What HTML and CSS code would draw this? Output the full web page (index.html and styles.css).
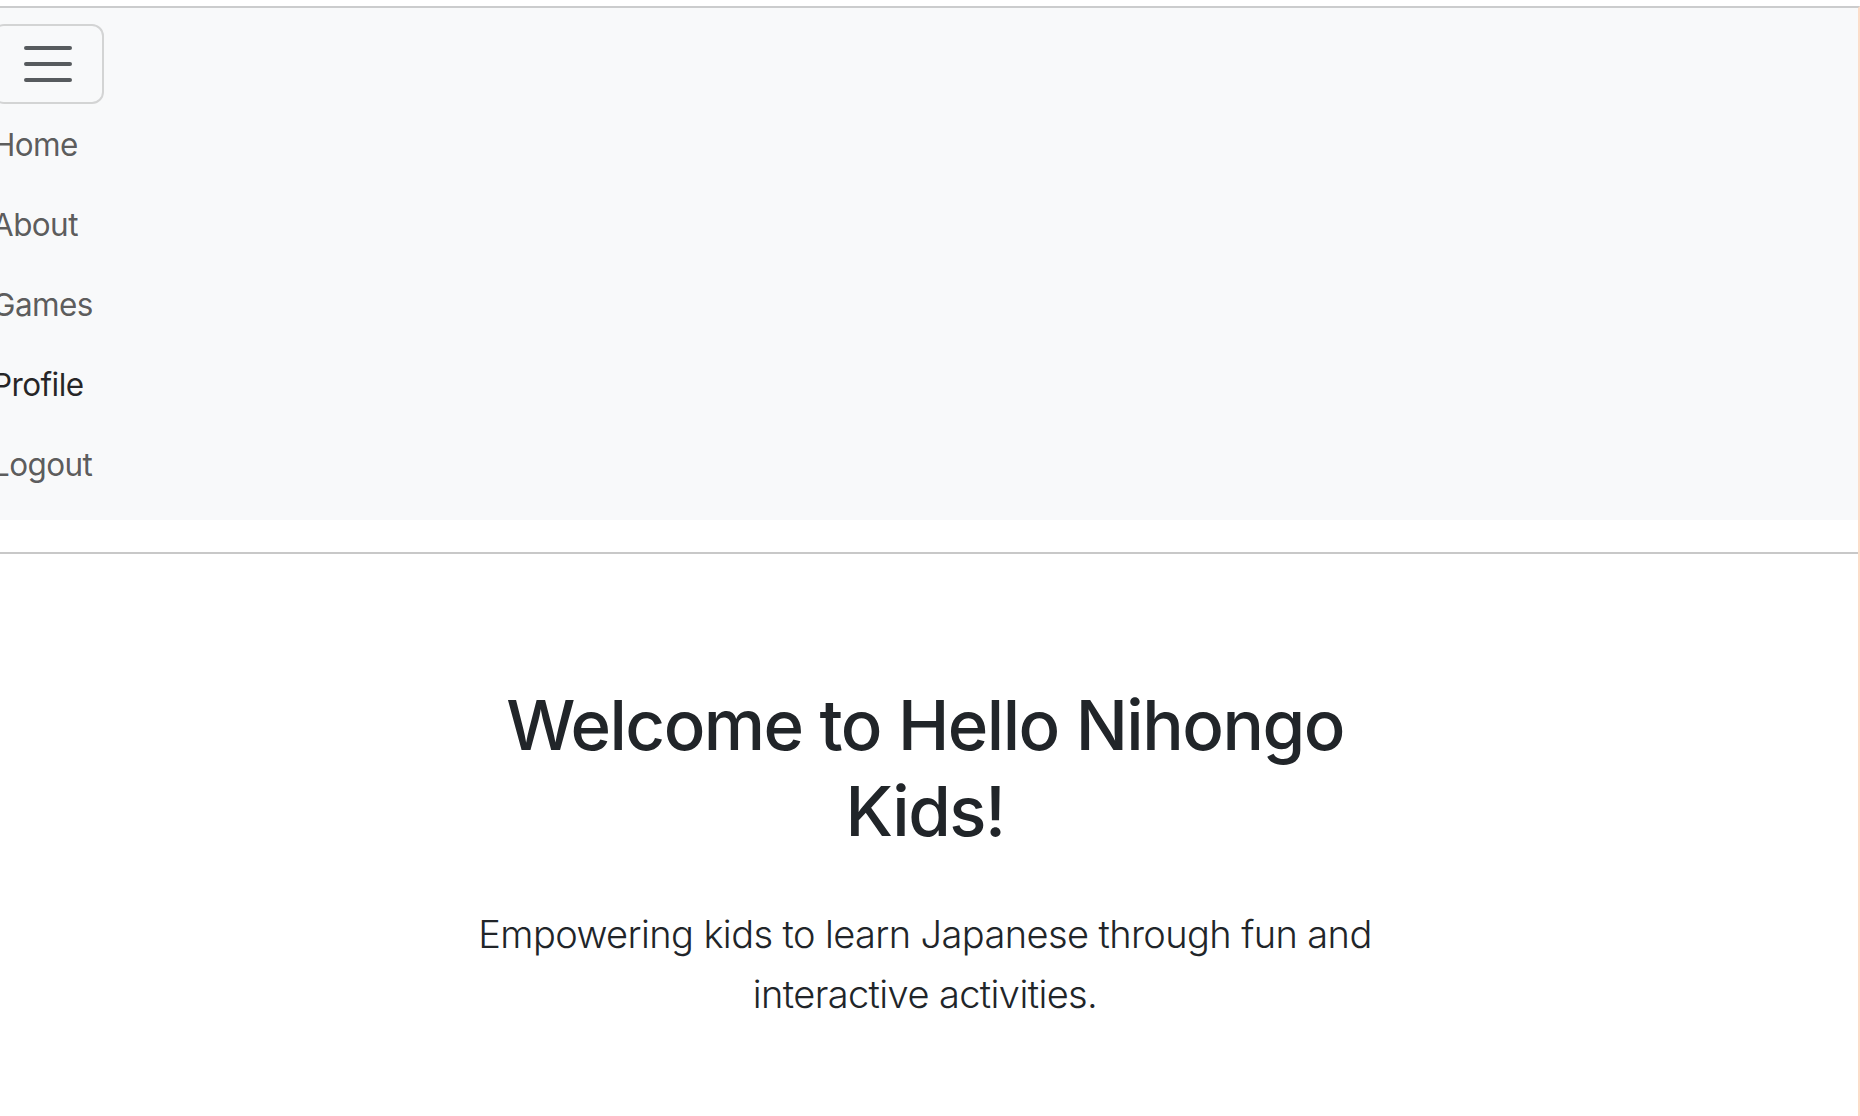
FILE: index.html
```html
<!DOCTYPE html>
<html lang="en">
<head>
<meta charset="utf-8">
<title>Hello Nihongo Kids</title>
<link rel="stylesheet" href="styles.css">
</head>
<body>
<div class="frame">
  <header class="site-header">
    <nav class="navbar">
      <div class="nav-inner">
        <button class="toggler" type="button" aria-label="Toggle navigation">
          <svg class="toggler-icon" viewBox="0 0 30 30" width="60" height="60">
            <path d="M4 7h22M4 15h22M4 23h22" stroke="rgba(33,37,41,0.75)" stroke-width="2" stroke-linecap="round" stroke-miterlimit="10" fill="none"/>
          </svg>
        </button>
        <ul class="nav-list">
          <li><a class="nav-link" href="#">Home</a></li>
          <li><a class="nav-link" href="#">About</a></li>
          <li><a class="nav-link" href="#">Games</a></li>
          <li><a class="nav-link active" href="#">Profile</a></li>
          <li><a class="nav-link" href="#">Logout</a></li>
        </ul>
      </div>
    </nav>
    <hr class="divider">
  </header>
  <main class="hero">
    <div class="hero-inner">
      <h1 class="hero-title">Welcome to Hello Nihongo Kids!</h1>
      <p class="lead">Empowering kids to learn Japanese through fun and interactive activities.</p>
    </div>
  </main>
</div>
</body>
</html>
```

FILE: styles.css
```css
* { box-sizing: border-box; }

html, body {
  margin: 0;
  padding: 0;
  background: #ffffff;
}

body {
  font-family: Inter, "Liberation Sans", sans-serif;
  color: #212529;
  overflow: hidden;
}

.frame {
  margin-top: 6px;
  border-top: 2px solid #cbcccd;
  border-right: 2px solid #fcdcc8;
  min-height: calc(100vh - 6px);
}

.navbar {
  background: #f8f9fa;
  padding: 16px 0;
}

.nav-inner {
  margin-left: -8px;
}

.toggler {
  display: block;
  padding: 8px 24px;
  margin: 0;
  border: 2px solid rgba(0, 0, 0, 0.15);
  border-radius: 12px;
  background: transparent;
  line-height: 1;
}

.toggler-icon {
  display: block;
  width: 60px;
  height: 60px;
}

.nav-list {
  list-style: none;
  margin: 0;
  padding: 0;
}

.nav-link {
  display: block;
  padding: 17px 0 15px;
  font-size: 31.5px;
  line-height: 48px;
  letter-spacing: -0.6px;
  color: rgba(0, 0, 0, 0.65);
  text-decoration: none;
}

.nav-link.active {
  color: rgba(0, 0, 0, 0.85);
}

.divider {
  margin: 32px 0 0;
  border: 0;
  border-top: 2px solid #c8c8c8;
  height: 0;
}

.hero {
  padding-top: 128px;
}

.hero-inner {
  max-width: 1000px;
  margin: 0 auto;
  padding: 0 28px 0 20px;
  text-align: center;
}

.hero-title {
  margin: 0 0 50px;
  font-size: 69px;
  line-height: 86px;
  font-weight: 500;
  letter-spacing: -1.5px;
}

.lead {
  margin: 0;
  font-size: 38px;
  line-height: 60px;
  font-weight: 300;
  letter-spacing: -0.6px;
}
```
